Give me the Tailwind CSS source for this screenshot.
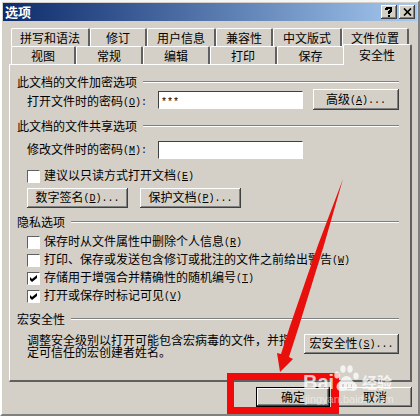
<!DOCTYPE html>
<html lang="zh-CN">
<head>
<meta charset="utf-8">
<title>选项</title>
<script src="https://cdn.jsdelivr.net/npm/@tailwindcss/browser@4"></script>
</head>
<body class="bg-[#d4d0c8] text-black text-[12px] leading-[14px] font-['Noto_Sans_CJK_SC',sans-serif] whitespace-nowrap">
<main class="relative flex min-h-screen flex-col overflow-hidden border-t-2 border-r-2 border-b-2 border-l-2 border-t-[#f4f6f8] border-l-white border-r-[#808080] border-b-[#808080] pt-px px-px">
  <header class="flex h-[18px] items-center justify-between bg-linear-to-r from-[#0f2a6b] to-[#a6caf0] pl-[2px] pr-[2px]">
    <h1 class="font-bold text-[13px] text-white">选项</h1>
    <div class="flex gap-[2px]">
      <button aria-label="帮助" class="flex h-[14px] w-4 items-center justify-center bg-[#d4d0c8] shadow-[inset_-1px_-1px_0_#404040,inset_1px_1px_0_#fff,inset_-2px_-2px_0_#808080]"><svg class="h-[10px] w-[8px]" viewBox="0 0 8 10" fill="none" stroke="#000" stroke-width="2"><path d="M1 3V2H2V1H6V4H5V5H4V7M3 9H5"/></svg></button>
      <button aria-label="关闭" class="flex h-[14px] w-4 items-center justify-center bg-[#d4d0c8] shadow-[inset_-1px_-1px_0_#404040,inset_1px_1px_0_#fff,inset_-2px_-2px_0_#808080]"><svg class="h-[8px] w-[9px]" viewBox="0 0 9 8" fill="none" stroke="#000" stroke-width="1.7"><path d="M1 .5L8 7.5M8 .5L1 7.5"/></svg></button>
    </div>
  </header>

  <div class="flex flex-1 flex-col pt-[7px] pr-[5px] pl-[6px]">
    <nav class="pr-px pl-[2px]">
      <div class="grid h-[18px] grid-cols-[79fr_57fr_69fr_57fr_69fr_67fr] pr-[2px]">
        <button class="rounded-t-[2px] border-t border-l border-r-2 border-t-white border-l-white border-r-[#606060]">拼写和语法</button>
        <button class="rounded-t-[2px] border-t border-l border-r-2 border-t-white border-l-white border-r-[#606060]">修订</button>
        <button class="rounded-t-[2px] border-t border-l border-r-2 border-t-white border-l-white border-r-[#606060]">用户信息</button>
        <button class="rounded-t-[2px] border-t border-l border-r-2 border-t-white border-l-white border-r-[#606060]">兼容性</button>
        <button class="rounded-t-[2px] border-t border-l border-r-2 border-t-white border-l-white border-r-[#606060]">中文版式</button>
        <button class="rounded-t-[2px] border-t border-l border-r-2 border-t-white border-l-white border-r-[#606060]">文件位置</button>
      </div>
      <div class="grid h-[18px] grid-cols-[65fr_67fr_67fr_67fr_66fr_68fr]">
        <button class="rounded-t-[2px] border-t border-l border-r-2 border-t-white border-l-white border-r-[#606060]">视图</button>
        <button class="rounded-t-[2px] border-t border-l border-r-2 border-t-white border-l-white border-r-[#606060]">常规</button>
        <button class="rounded-t-[2px] border-t border-l border-r-2 border-t-white border-l-white border-r-[#606060]">编辑</button>
        <button class="rounded-t-[2px] border-t border-l border-r-2 border-t-white border-l-white border-r-[#606060]">打印</button>
        <button class="rounded-t-[2px] border-t border-l border-t-white border-l-white">保存</button>
        <button class="relative -mt-[2px] -mr-px -mb-px rounded-t-[2px] border-t border-l border-r-2 border-t-white border-l-white border-r-[#606060] bg-[#d4d0c8]">安全性</button>
      </div>
    </nav>

    <section class="flex flex-col border-t border-l border-r-2 border-b-2 border-t-white border-l-white border-r-[#606060] border-b-[#606060] pt-[10px] pr-[11px] pb-[22px] pl-[7px]">
      <h2 class="flex h-[14px] items-center gap-[6px]">此文档的文件加密选项<span class="h-[2px] flex-1 border-t border-t-[#808080] bg-white"></span></h2>
      <div class="flex h-[21px] items-center pl-[10px]">
        <label for="openpw" class="w-[131px] pt-[5px]">打开文件时的密码<span class="align-[1px] font-['Liberation_Mono',monospace] text-[10px]">(<u>O</u>):</span></label>
        <input id="openpw" type="text" value="***" class="h-[18px] min-w-0 flex-1 border border-t-[#404040] border-l-[#404040] border-r-white border-b-white bg-white pt-[5px] pl-[2px] font-['Liberation_Mono',monospace] text-[10px] text-black outline-none">
        <button class="ml-[10px] h-[21px] w-[86px] bg-[#d4d0c8] shadow-[inset_-1px_-1px_0_#404040,inset_1px_1px_0_#fff,inset_-2px_-2px_0_#808080]">高级<span class="align-[1px] font-['Liberation_Mono',monospace] text-[10px]">(<u>A</u>)...</span></button>
      </div>
      <h2 class="mt-[9px] flex h-[14px] items-center gap-[6px]">此文档的文件共享选项<span class="h-[2px] flex-1 border-t border-t-[#808080] bg-white"></span></h2>
      <div class="mt-2 flex h-[18px] items-center pl-[10px] pr-24">
        <label for="editpw" class="w-[131px]">修改文件时的密码<span class="align-[1px] font-['Liberation_Mono',monospace] text-[10px]">(<u>M</u>):</span></label>
        <input id="editpw" type="text" class="h-[18px] min-w-0 flex-1 border border-t-[#404040] border-l-[#404040] border-r-white border-b-white bg-white outline-none">
      </div>
      <label class="mt-2 ml-[10px] flex h-[18px] items-center gap-1"><input type="checkbox" class="size-[13px] appearance-none border border-t-[#606060] border-l-[#606060] border-r-white border-b-white bg-white"><span>建议以只读方式打开文档<span class="align-[1px] font-['Liberation_Mono',monospace] text-[10px]">(<u>E</u>)</span></span></label>
      <div class="mt-[3px] ml-[10px] flex gap-3">
        <button class="h-[20px] w-[101px] bg-[#d4d0c8] shadow-[inset_-1px_-1px_0_#404040,inset_1px_1px_0_#fff,inset_-2px_-2px_0_#808080]">数字签名<span class="align-[1px] font-['Liberation_Mono',monospace] text-[10px]">(<u>D</u>)...</span></button>
        <button class="h-[20px] w-[101px] bg-[#d4d0c8] shadow-[inset_-1px_-1px_0_#404040,inset_1px_1px_0_#fff,inset_-2px_-2px_0_#808080]">保护文档<span class="align-[1px] font-['Liberation_Mono',monospace] text-[10px]">(<u>P</u>)...</span></button>
      </div>
      <h2 class="mt-[7px] flex h-[14px] items-center gap-[6px]">隐私选项<span class="h-[2px] flex-1 border-t border-t-[#808080] bg-white"></span></h2>
      <div class="mt-1 ml-[10px] flex flex-col">
        <label class="flex h-[18px] items-center gap-1"><input type="checkbox" class="size-[13px] appearance-none border border-t-[#606060] border-l-[#606060] border-r-white border-b-white bg-white"><span>保存时从文件属性中删除个人信息<span class="align-[1px] font-['Liberation_Mono',monospace] text-[10px]">(<u>R</u>)</span></span></label>
        <label class="flex h-[18px] items-center gap-1"><input type="checkbox" class="size-[13px] appearance-none border border-t-[#606060] border-l-[#606060] border-r-white border-b-white bg-white"><span>打印、保存或发送包含修订或批注的文件之前给出警告<span class="align-[1px] font-['Liberation_Mono',monospace] text-[10px]">(<u>W</u>)</span></span></label>
        <label class="flex h-[18px] items-center gap-1"><span class="grid size-[13px] place-items-center"><input type="checkbox" checked class="col-start-1 row-start-1 size-[13px] appearance-none border border-t-[#606060] border-l-[#606060] border-r-white border-b-white bg-white"><svg class="col-start-1 row-start-1 size-[7px]" viewBox="0 0 7 7"><path d="M0 2L2 4L7 0V3L2 7L0 5Z"/></svg></span><span>存储用于增强合并精确性的随机编号<span class="align-[1px] font-['Liberation_Mono',monospace] text-[10px]">(<u>T</u>)</span></span></label>
        <label class="flex h-[18px] items-center gap-1"><span class="grid size-[13px] place-items-center"><input type="checkbox" checked class="col-start-1 row-start-1 size-[13px] appearance-none border border-t-[#606060] border-l-[#606060] border-r-white border-b-white bg-white"><svg class="col-start-1 row-start-1 size-[7px]" viewBox="0 0 7 7"><path d="M0 2L2 4L7 0V3L2 7L0 5Z"/></svg></span><span>打开或保存时标记可见<span class="align-[1px] font-['Liberation_Mono',monospace] text-[10px]">(<u>V</u>)</span></span></label>
      </div>
      <h2 class="mt-[7px] flex h-[14px] items-center gap-[6px]">宏安全性<span class="h-[2px] flex-1 border-t border-t-[#808080] bg-white"></span></h2>
      <div class="mt-2 flex items-start pl-[10px]">
        <p class="min-w-0 flex-1 leading-[12px]">调整安全级别以打开可能包含宏病毒的文件，并指<br>定可信任的宏创建者姓名。</p>
        <button class="h-[20px] w-[95px] shrink-0 bg-[#d4d0c8] shadow-[inset_-1px_-1px_0_#404040,inset_1px_1px_0_#fff,inset_-2px_-2px_0_#808080]">宏安全性<span class="align-[1px] font-['Liberation_Mono',monospace] text-[10px]">(<u>S</u>)...</span></button>
      </div>
    </section>

    <footer class="mt-[5px] flex justify-end gap-2">
      <button class="h-[20px] w-[74px] border border-black bg-[#d4d0c8] shadow-[inset_-1px_-1px_0_#404040,inset_1px_1px_0_#fff,inset_-2px_-2px_0_#808080]">确定</button>
      <button class="h-[20px] w-[74px] bg-[#d4d0c8] shadow-[inset_-1px_-1px_0_#404040,inset_1px_1px_0_#fff,inset_-2px_-2px_0_#808080]">取消</button>
    </footer>
  </div>

  <div class="pointer-events-none absolute right-[79px] bottom-0 h-[41px] w-[112px] border-[7px] border-r-8 border-[#f20a0a]"></div>
  <svg class="pointer-events-none absolute right-[74px] bottom-[42px] h-[194px] w-[68px]" viewBox="276 178 68 194"><path fill="#e8100c" d="M343 179L324 245L299 326L289 357L293 359L280 372L277 353L281 354L290 326L318 245Z"/></svg>
  <div class="pointer-events-none absolute right-[24px] bottom-[8px] flex w-[91px] flex-col text-white/75">
    <div class="flex h-[28px] items-end">
      <span class="w-[31px] font-['Liberation_Sans',sans-serif] text-[20px] font-bold leading-[20px]">Bai</span>
      <svg class="h-[28px] w-[25px] shrink-0" viewBox="0 0 25 28" fill="currentColor"><ellipse cx="3" cy="11" rx="2.7" ry="3.6"/><ellipse cx="9" cy="5" rx="2.7" ry="3.8"/><ellipse cx="16" cy="5" rx="2.7" ry="3.8"/><ellipse cx="22" cy="12" rx="2.7" ry="3.6"/><path fill-rule="evenodd" d="M12.500 12C8 12 8 16 5 18C1 21 2 27 7 27C10 27 15 26 18 27C24 28 25 21 20 18C17 16 17 12 12.500 12ZM8 20H10V24H8ZM13 20H14V24H17V20H18V25H13Z"/></svg>
      <span class="ml-[3px] text-[15px] font-bold leading-[20px]">经验</span>
    </div>
    <span class="pl-[2px] font-['Liberation_Sans',sans-serif] text-[11px] leading-[14px] text-white/50">jingyan.baidu.com</span>
  </div>
</main>
</body>
</html>
